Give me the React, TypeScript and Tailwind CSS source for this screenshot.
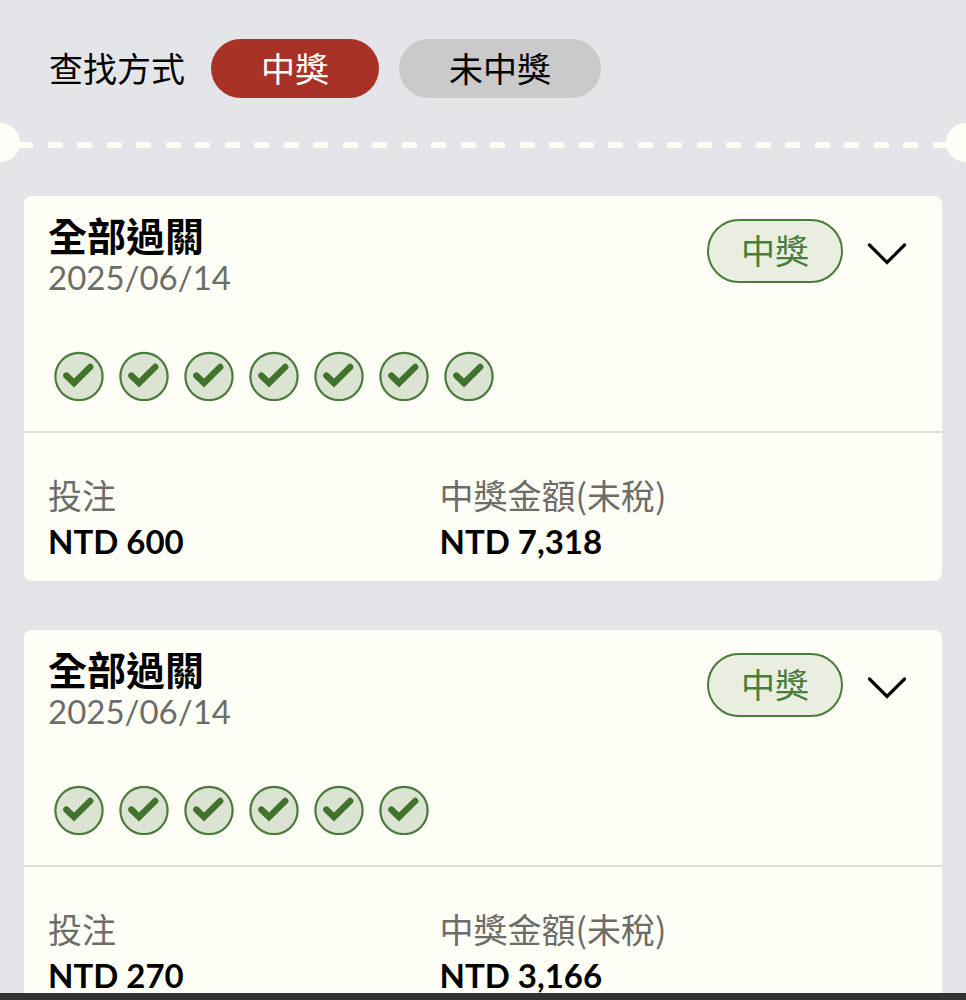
import React from 'react'

interface Ticket {
  id: number;
  title: string;
  date: string;
  legs: number;
  bet: string;
  prize: string;
}

const tickets: Ticket[] = [
  { id: 1, title: '全部過關', date: '2025/06/14', legs: 7, bet: 'NTD 600', prize: 'NTD 7,318' },
  { id: 2, title: '全部過關', date: '2025/06/14', legs: 6, bet: 'NTD 270', prize: 'NTD 3,166' },
];

// FilterBar Component
interface FilterBarProps {
  won: boolean;
  onChange: (won: boolean) => void;
}

const FilterBar: React.FC<FilterBarProps> = ({ won, onChange }) => {
  const active = 'bg-[#a83226] text-[#fffff7]';
  const inactive = 'bg-[#cacaca] text-black';

  return (
    <div className="flex items-center gap-5 pl-[49px] pt-[39px]">
      <span className="mr-1.5 text-[34px] leading-[59px] text-black">查找方式</span>
      <button
        type="button"
        aria-pressed={won}
        onClick={() => onChange(true)}
        className={`rounded-full px-[50px] text-[34px] leading-[59px] ${won ? active : inactive}`}
      >
        中獎
      </button>
      <button
        type="button"
        aria-pressed={!won}
        onClick={() => onChange(false)}
        className={`rounded-full px-[50px] text-[34px] leading-[59px] ${won ? inactive : active}`}
      >
        未中獎
      </button>
    </div>
  );
};

// Perforated ticket edge
const Perforation: React.FC = () => (
  <div className="mt-[25px] flex items-center" aria-hidden="true">
    <span className="h-[39px] w-5 rounded-r-full bg-[#fffff7]" />
    <span className="-mx-0.5 flex flex-1 justify-between pt-1">
      {Array.from({ length: 32 }, (_, i) => (
        <span key={i} className="h-1.5 w-[15px] rounded-xs bg-[#fffff7]" />
      ))}
    </span>
    <span className="h-[39px] w-5 rounded-l-full bg-[#fffff7]" />
  </div>
);

const CheckIcon: React.FC = () => (
  <svg width="50" height="50" viewBox="0 0 50 50" fill="none" aria-hidden="true">
    <circle cx="25" cy="25.5" r="23.6" fill="#dbe3d2" stroke="#497b3a" strokeWidth="2.2" />
    <path d="M12.4 24.6 L20 32 L36.2 16" stroke="#41732d" strokeWidth="6.4" strokeLinecap="round" />
  </svg>
);

const ChevronIcon: React.FC = () => (
  <svg width="40" height="24" viewBox="0 0 40 24" fill="none" aria-hidden="true">
    <path d="M2.5 3 L20 20.5 L37.5 3" stroke="#000" strokeWidth="3.2" strokeLinecap="round" />
  </svg>
);

// Amount Component
const Amount: React.FC<{ label: string; value: string }> = ({ label, value }) => (
  <div>
    <dt className="font-['Noto_Sans_CJK_TC',sans-serif] text-[34px] leading-[46px] text-[#6c6c68]">{label}</dt>
    <dd className="text-[33px] font-bold leading-[46px] text-black">{value}</dd>
  </div>
);

// TicketCard Component
const TicketCard: React.FC<{ ticket: Ticket }> = ({ ticket }) => (
  <article className="shrink-0 rounded-lg bg-[#fffff7]">
    <div className="flex items-start px-6 pt-5">
      <div className="flex-1">
        <h2 className="text-[39px] font-bold leading-10 text-black">{ticket.title}</h2>
        <p className="text-[33px] leading-[42px] text-[#6c6c68]">{ticket.date}</p>
      </div>
      <span className="mt-[3px] rounded-full border-2 border-[#497b3a] bg-[#e9eee1] px-8 text-[34px] leading-[60px] text-[#497b3a]">
        中獎
      </span>
      <button type="button" aria-label="展開" className="ml-6 mr-[11px] mt-[3px] flex h-[70px] items-center">
        <ChevronIcon />
      </button>
    </div>
    <div className="flex gap-[15px] border-b-2 border-[#deded9] px-[30px] pb-[30px] pt-[53px]">
      {Array.from({ length: ticket.legs }, (_, i) => (
        <CheckIcon key={i} />
      ))}
    </div>
    <dl className="grid grid-cols-[45%_55%] px-6 pb-[17px] pt-[39px]">
      <Amount label="投注" value={ticket.bet} />
      <Amount label="中獎金額(未稅)" value={ticket.prize} />
    </dl>
  </article>
);

export default function App() {
  const [won, setWon] = React.useState(true);

  return (
    <div
      lang="zh-Hant-TW"
      className="flex h-screen flex-col bg-[#e4e5e8] font-['Lato','Noto_Sans_CJK_TC',sans-serif]"
    >
      <main className="min-h-0 flex-1 overflow-y-auto [scrollbar-width:none]">
        <FilterBar won={won} onChange={setWon} />
        <Perforation />
        <section className="flex flex-col gap-[49px] px-6 pb-12 pt-[34px]">
          {tickets.map((ticket) => (
            <TicketCard key={ticket.id} ticket={ticket} />
          ))}
        </section>
      </main>
      <footer className="h-[7px] shrink-0 bg-[#333]" />
    </div>
  );
}
